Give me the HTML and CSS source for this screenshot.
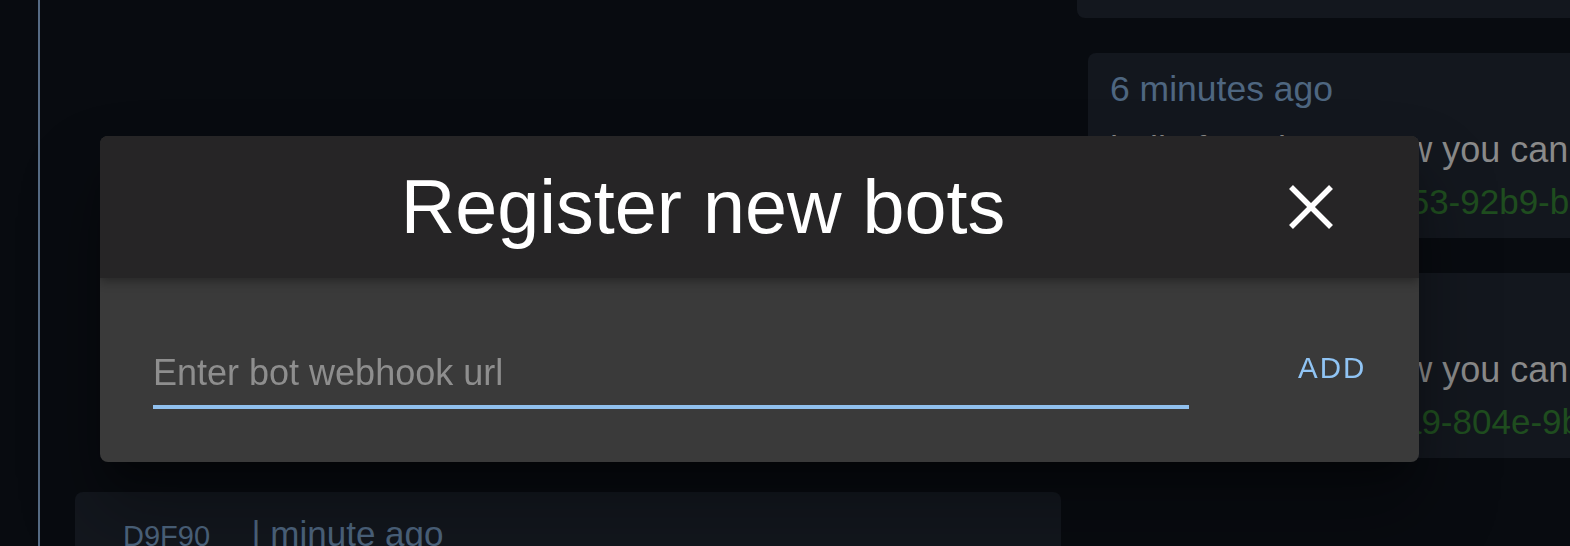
FILE: index.html
```html
<!DOCTYPE html>
<html lang="en">
<head>
<meta charset="utf-8">
<title>Register new bots</title>
<link rel="stylesheet" href="styles.css">
</head>
<body>
<div class="page">
  <div class="rail"></div>
  <main class="feed">
    <div class="card card-main">
      <span class="sender">D9F90</span>
      <span class="time">| minute ago</span>
    </div>
  </main>
  <aside class="side">
    <div class="card side-top"></div>
    <div class="card side-card">
      <div class="time">6 minutes ago</div>
      <div class="msg">hello from bots! now you can</div>
      <div class="uuid">token: 4c1f7a02-3e53-92b9-b1c4-8d0a6e2f5c31</div>
    </div>
    <div class="card side-card">
      <div class="time">5 minutes ago</div>
      <div class="msg">hello from bots! now you can</div>
      <div class="uuid">uuid: 7b2e0d18-41a9-804e-9b3f-2c6d1e8a4f07</div>
    </div>
  </aside>
</div>

<div class="modal" role="dialog" aria-label="Register new bots">
  <header class="modal-header">
    <h1 class="modal-title">Register new bots</h1>
    <button class="close-btn" aria-label="Close">
      <svg width="44" height="44" viewBox="0 0 44 44" aria-hidden="true">
        <line x1="2" y1="2" x2="42" y2="42" stroke="#ffffff" stroke-width="5.5"/>
        <line x1="42" y1="2" x2="2" y2="42" stroke="#ffffff" stroke-width="5.5"/>
      </svg>
    </button>
  </header>
  <div class="modal-body">
    <div class="field">
      <input class="field-input" type="text" placeholder="Enter bot webhook url">
    </div>
    <button class="add-btn">ADD</button>
  </div>
</div>
</body>
</html>
```

FILE: styles.css
```css
* { box-sizing: border-box; }

html, body {
  margin: 0;
  padding: 0;
  height: 100%;
}

body {
  background: #080b10;
  font-family: "Liberation Sans", Arial, Helvetica, sans-serif;
  overflow: hidden;
}

.page {
  display: flex;
  height: 100vh;
}

.rail {
  flex: none;
  width: 2px;
  margin-left: 38px;
  background: #566b84;
}

.feed {
  flex: none;
  width: 1037px;
  padding: 492px 0 0 35px;
}

.card {
  background: #13171e;
  border-radius: 8px;
}

.card-main {
  width: 986px;
  height: 120px;
  padding: 20px 0 0 48px;
  white-space: nowrap;
}

.sender {
  font-size: 29px;
  line-height: 44px;
  color: #4e6680;
  margin-right: 37px;
}

.card-main .time {
  font-size: 35px;
  line-height: 44px;
  color: #4e6680;
}

.side {
  flex: 1;
  min-width: 0;
  display: flex;
  flex-direction: column;
  gap: 35px;
}

.side-top {
  height: 118px;
  margin-top: -100px;
  margin-right: -20px;
}

.side-card {
  margin-left: 11px;
  margin-right: -400px;
  height: 185px;
  padding: 14px 0 0 22px;
  white-space: nowrap;
  overflow: hidden;
}

.side-card .time {
  font-size: 35.5px;
  line-height: 44px;
  color: #4e6680;
}

.side-card .msg {
  margin-top: 17px;
  font-size: 36px;
  line-height: 44px;
  color: #8a8a8a;
}

.side-card .uuid {
  margin-top: 8px;
  font-size: 35px;
  line-height: 44px;
  color: #1f4d1f;
}

/* Modal */
.modal {
  position: fixed;
  left: 100px;
  top: 136px;
  width: 1319px;
  height: 326px;
  border-radius: 8px;
  background: #3a3a3a;
  box-shadow: 0 22px 30px -14px rgba(0, 0, 0, 0.4), 0 48px 76px 6px rgba(0, 0, 0, 0.28);
  overflow: hidden;
  display: flex;
  flex-direction: column;
}

.modal-header {
  position: relative;
  z-index: 1;
  height: 142px;
  flex: none;
  display: flex;
  align-items: center;
  padding: 0 60px 0 43px;
  background: #262526;
  box-shadow: 0 3px 10px rgba(0, 0, 0, 0.35);
}

.modal-title {
  flex: 1;
  margin: 0;
  text-align: center;
  font-size: 75.5px;
  font-weight: normal;
  color: #ffffff;
  line-height: normal;
}

.close-btn {
  flex: none;
  width: 96px;
  height: 96px;
  padding: 0;
  border: 0;
  background: transparent;
  display: flex;
  align-items: center;
  justify-content: center;
  margin-top: -1px;
}

.close-btn svg { display: block; }

.modal-body {
  flex: 1;
  display: flex;
  align-items: flex-start;
  padding: 73px 40px 0 53px;
}

.field {
  flex: none;
  width: 1036px;
  border-bottom: 4px solid #90c0ee;
  padding-bottom: 10px;
}

.field-input {
  display: block;
  width: 100%;
  height: 44px;
  padding: 0;
  border: 0;
  outline: none;
  background: transparent;
  font-family: "Liberation Sans", Arial, Helvetica, sans-serif;
  font-size: 36px;
  line-height: 44px;
  color: #e0e0e0;
}

.field-input::placeholder {
  color: #8e8e8e;
  opacity: 1;
}

.add-btn {
  flex: none;
  margin-left: 93px;
  margin-top: -13px;
  padding: 12px 16px;
  border: 0;
  background: transparent;
  font-family: "Liberation Sans", Arial, Helvetica, sans-serif;
  font-size: 29.5px;
  line-height: 36px;
  letter-spacing: 2px;
  color: #90c4f4;
}
```
